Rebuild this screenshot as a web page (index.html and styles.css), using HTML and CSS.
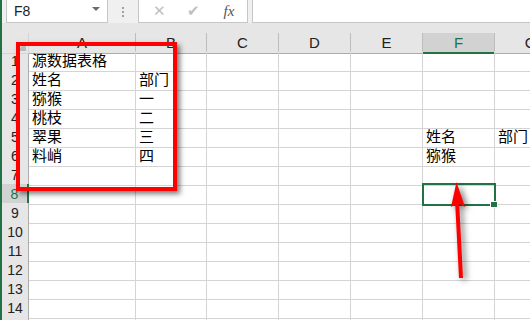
FILE: index.html
```html
<!DOCTYPE html>
<html lang="zh-CN">
<head>
    <meta charset="UTF-8">
    <title>源数据表格</title>
    <link rel="stylesheet" href="styles.css">
</head>
<body>
    <div class="toolbar">
        <div class="namebox">
            <span>F8</span>
            <span class="drop"></span>
        </div>
        <div class="dots"><i></i><i></i><i></i></div>
        <div class="buttons">
            <span class="btn">&#x2715;</span>
            <span class="btn">&#x2714;</span>
            <span class="btn fx">fx</span>
        </div>
        <div class="formula"></div>
    </div>
    <div class="band"></div>

    <div class="sheet">
        <div class="row head">
            <div class="corner"></div>
            <div class="col">A</div><div class="col">B</div><div class="col">C</div><div class="col">D</div>
            <div class="col">E</div><div class="col sel">F</div><div class="col">G</div>
        </div>
        <div class="row"><div class="num">1</div><div class="cell">源数据表格</div><div class="cell"></div><div class="cell"></div><div class="cell"></div><div class="cell"></div><div class="cell"></div><div class="cell"></div></div>
        <div class="row"><div class="num">2</div><div class="cell">姓名</div><div class="cell">部门</div><div class="cell"></div><div class="cell"></div><div class="cell"></div><div class="cell"></div><div class="cell"></div></div>
        <div class="row"><div class="num">3</div><div class="cell">猕猴</div><div class="cell">一</div><div class="cell"></div><div class="cell"></div><div class="cell"></div><div class="cell"></div><div class="cell"></div></div>
        <div class="row"><div class="num">4</div><div class="cell">桃枝</div><div class="cell">二</div><div class="cell"></div><div class="cell"></div><div class="cell"></div><div class="cell"></div><div class="cell"></div></div>
        <div class="row"><div class="num">5</div><div class="cell">翠果</div><div class="cell">三</div><div class="cell"></div><div class="cell"></div><div class="cell"></div><div class="cell">姓名</div><div class="cell">部门</div></div>
        <div class="row"><div class="num">6</div><div class="cell">料峭</div><div class="cell">四</div><div class="cell"></div><div class="cell"></div><div class="cell"></div><div class="cell">猕猴</div><div class="cell"></div></div>
        <div class="row"><div class="num">7</div><div class="cell"></div><div class="cell"></div><div class="cell"></div><div class="cell"></div><div class="cell"></div><div class="cell"></div><div class="cell"></div></div>
        <div class="row"><div class="num sel">8</div><div class="cell"></div><div class="cell"></div><div class="cell"></div><div class="cell"></div><div class="cell"></div><div class="cell active"><span class="handle"></span></div><div class="cell"></div></div>
        <div class="row"><div class="num">9</div><div class="cell"></div><div class="cell"></div><div class="cell"></div><div class="cell"></div><div class="cell"></div><div class="cell"></div><div class="cell"></div></div>
        <div class="row"><div class="num">10</div><div class="cell"></div><div class="cell"></div><div class="cell"></div><div class="cell"></div><div class="cell"></div><div class="cell"></div><div class="cell"></div></div>
        <div class="row"><div class="num">11</div><div class="cell"></div><div class="cell"></div><div class="cell"></div><div class="cell"></div><div class="cell"></div><div class="cell"></div><div class="cell"></div></div>
        <div class="row"><div class="num">12</div><div class="cell"></div><div class="cell"></div><div class="cell"></div><div class="cell"></div><div class="cell"></div><div class="cell"></div><div class="cell"></div></div>
        <div class="row"><div class="num">13</div><div class="cell"></div><div class="cell"></div><div class="cell"></div><div class="cell"></div><div class="cell"></div><div class="cell"></div><div class="cell"></div></div>
        <div class="row"><div class="num">14</div><div class="cell"></div><div class="cell"></div><div class="cell"></div><div class="cell"></div><div class="cell"></div><div class="cell"></div><div class="cell"></div></div>
        <div class="row"><div class="num">15</div><div class="cell"></div><div class="cell"></div><div class="cell"></div><div class="cell"></div><div class="cell"></div><div class="cell"></div><div class="cell"></div></div>
    </div>

    <!-- annotations drawn over the sheet -->
    <div class="frame"></div>
    <svg class="arrow" width="40" height="110" viewBox="0 0 40 110">
        <line x1="17" y1="20" x2="21" y2="98" stroke="#ff0000" stroke-width="4"/>
        <polygon points="16.5,2 11,27 18,23 25,27" fill="#ff0000"/>
    </svg>
</body>
</html>
```

FILE: styles.css
```css
body {
    margin: 0;
    width: 530px;
    height: 320px;
    overflow: hidden;
    position: relative;
    border-left: 2px solid #217346;
    box-sizing: border-box;
    background: #ffffff;
    font-family: "Liberation Sans", Arial, sans-serif;
}
.toolbar {
    display: flex;
    height: 23px;
    background: #f0f0f0;
}
.namebox {
    width: 102px;
    margin-left: 4px;
    margin-top: -1px;
    background: white;
    border: 1px solid #c6c6c6;
    box-sizing: border-box;
    display: flex;
    align-items: center;
    justify-content: space-between;
    padding: 0 7px 0 7px;
    font-size: 14px;
    color: #222;
}
.drop {
    width: 0;
    height: 0;
    border-left: 4px solid transparent;
    border-right: 4px solid transparent;
    border-top: 4px solid #6d6d6d;
    margin-top: -4px;
}
.dots {
    width: 30px;
    display: flex;
    flex-direction: column;
    align-items: center;
    justify-content: center;
    gap: 2px;
}
.dots i {
    width: 2px;
    height: 2px;
    background: #a0a0a0;
}
.buttons {
    width: 110px;
    margin-top: -1px;
    background: white;
    border: 1px solid #c6c6c6;
    box-sizing: border-box;
    display: flex;
    align-items: center;
    padding-left: 12px;
    gap: 18px;
}
.btn {
    color: #c0c0c0;
    font-size: 15px;
    width: 16px;
    text-align: center;
}
.fx {
    font-family: "Liberation Serif", serif;
    font-style: italic;
    color: #555;
    font-size: 15px;
    margin-left: 2px;
}
.formula {
    flex: 1;
    margin-left: 4px;
    margin-top: -1px;
    background: white;
    border: 1px solid #c6c6c6;
    border-right: none;
}
.band {
    height: 10px;
    background: #e6e6e6;
}
.sheet {
    overflow: hidden;
}
.row {
    display: grid;
    grid-template-columns: 27px 107px 71px 72px 72px 72px 72px 72px;
    height: 19px;
}
.row.head {
    height: 18px;
}
.row > div {
    box-sizing: border-box;
    border-right: 1px solid #d4d4d4;
    border-bottom: 1px solid #d4d4d4;
}
.corner {
    background: #e6e6e6;
    position: relative;
}
.corner::after {
    content: "";
    position: absolute;
    right: 2px;
    bottom: 2px;
    border-left: 9px solid transparent;
    border-bottom: 9px solid #b8b8b8;
}
.row .col {
    background: #e6e6e6;
    border-right-color: #bdbdbd;
    border-bottom-color: #ababab;
    font-size: 15px;
    color: #222;
    text-align: center;
    line-height: 19px;
}
.row .col.sel {
    background: #d2d2d2;
    color: #217346;
    border-bottom: 2px solid #217346;
}
.row .num {
    background: #e6e6e6;
    border-right-color: #ababab;
    font-size: 14px;
    color: #222;
    text-align: center;
    line-height: 20px;
}
.row .num.sel {
    background: #d2d2d2;
    color: #217346;
    border-right: 2px solid #217346;
}
.cell {
    font-family: "Noto Sans CJK SC", "Liberation Sans", sans-serif;
    font-size: 15px;
    line-height: 18px;
    padding-left: 3px;
    white-space: nowrap;
    color: #000;
}
.active {
    position: relative;
}
.active::before {
    content: "";
    position: absolute;
    left: -1px;
    top: -1px;
    right: -2px;
    bottom: -2px;
    border: 2px solid #217346;
}
.handle {
    position: absolute;
    right: -4px;
    bottom: -4px;
    width: 6px;
    height: 5px;
    background: #217346;
    border: 1px solid white;
}
.frame {
    position: absolute;
    left: 14px;
    top: 42px;
    width: 161px;
    height: 149px;
    box-sizing: border-box;
    border: 4px solid #ff0000;
    box-shadow: 3px 3px 5px rgba(0, 0, 0, 0.5);
}
.arrow {
    position: absolute;
    left: 438px;
    top: 180px;
    filter: drop-shadow(3px 2px 3px rgba(0, 0, 0, 0.55));
}
```
